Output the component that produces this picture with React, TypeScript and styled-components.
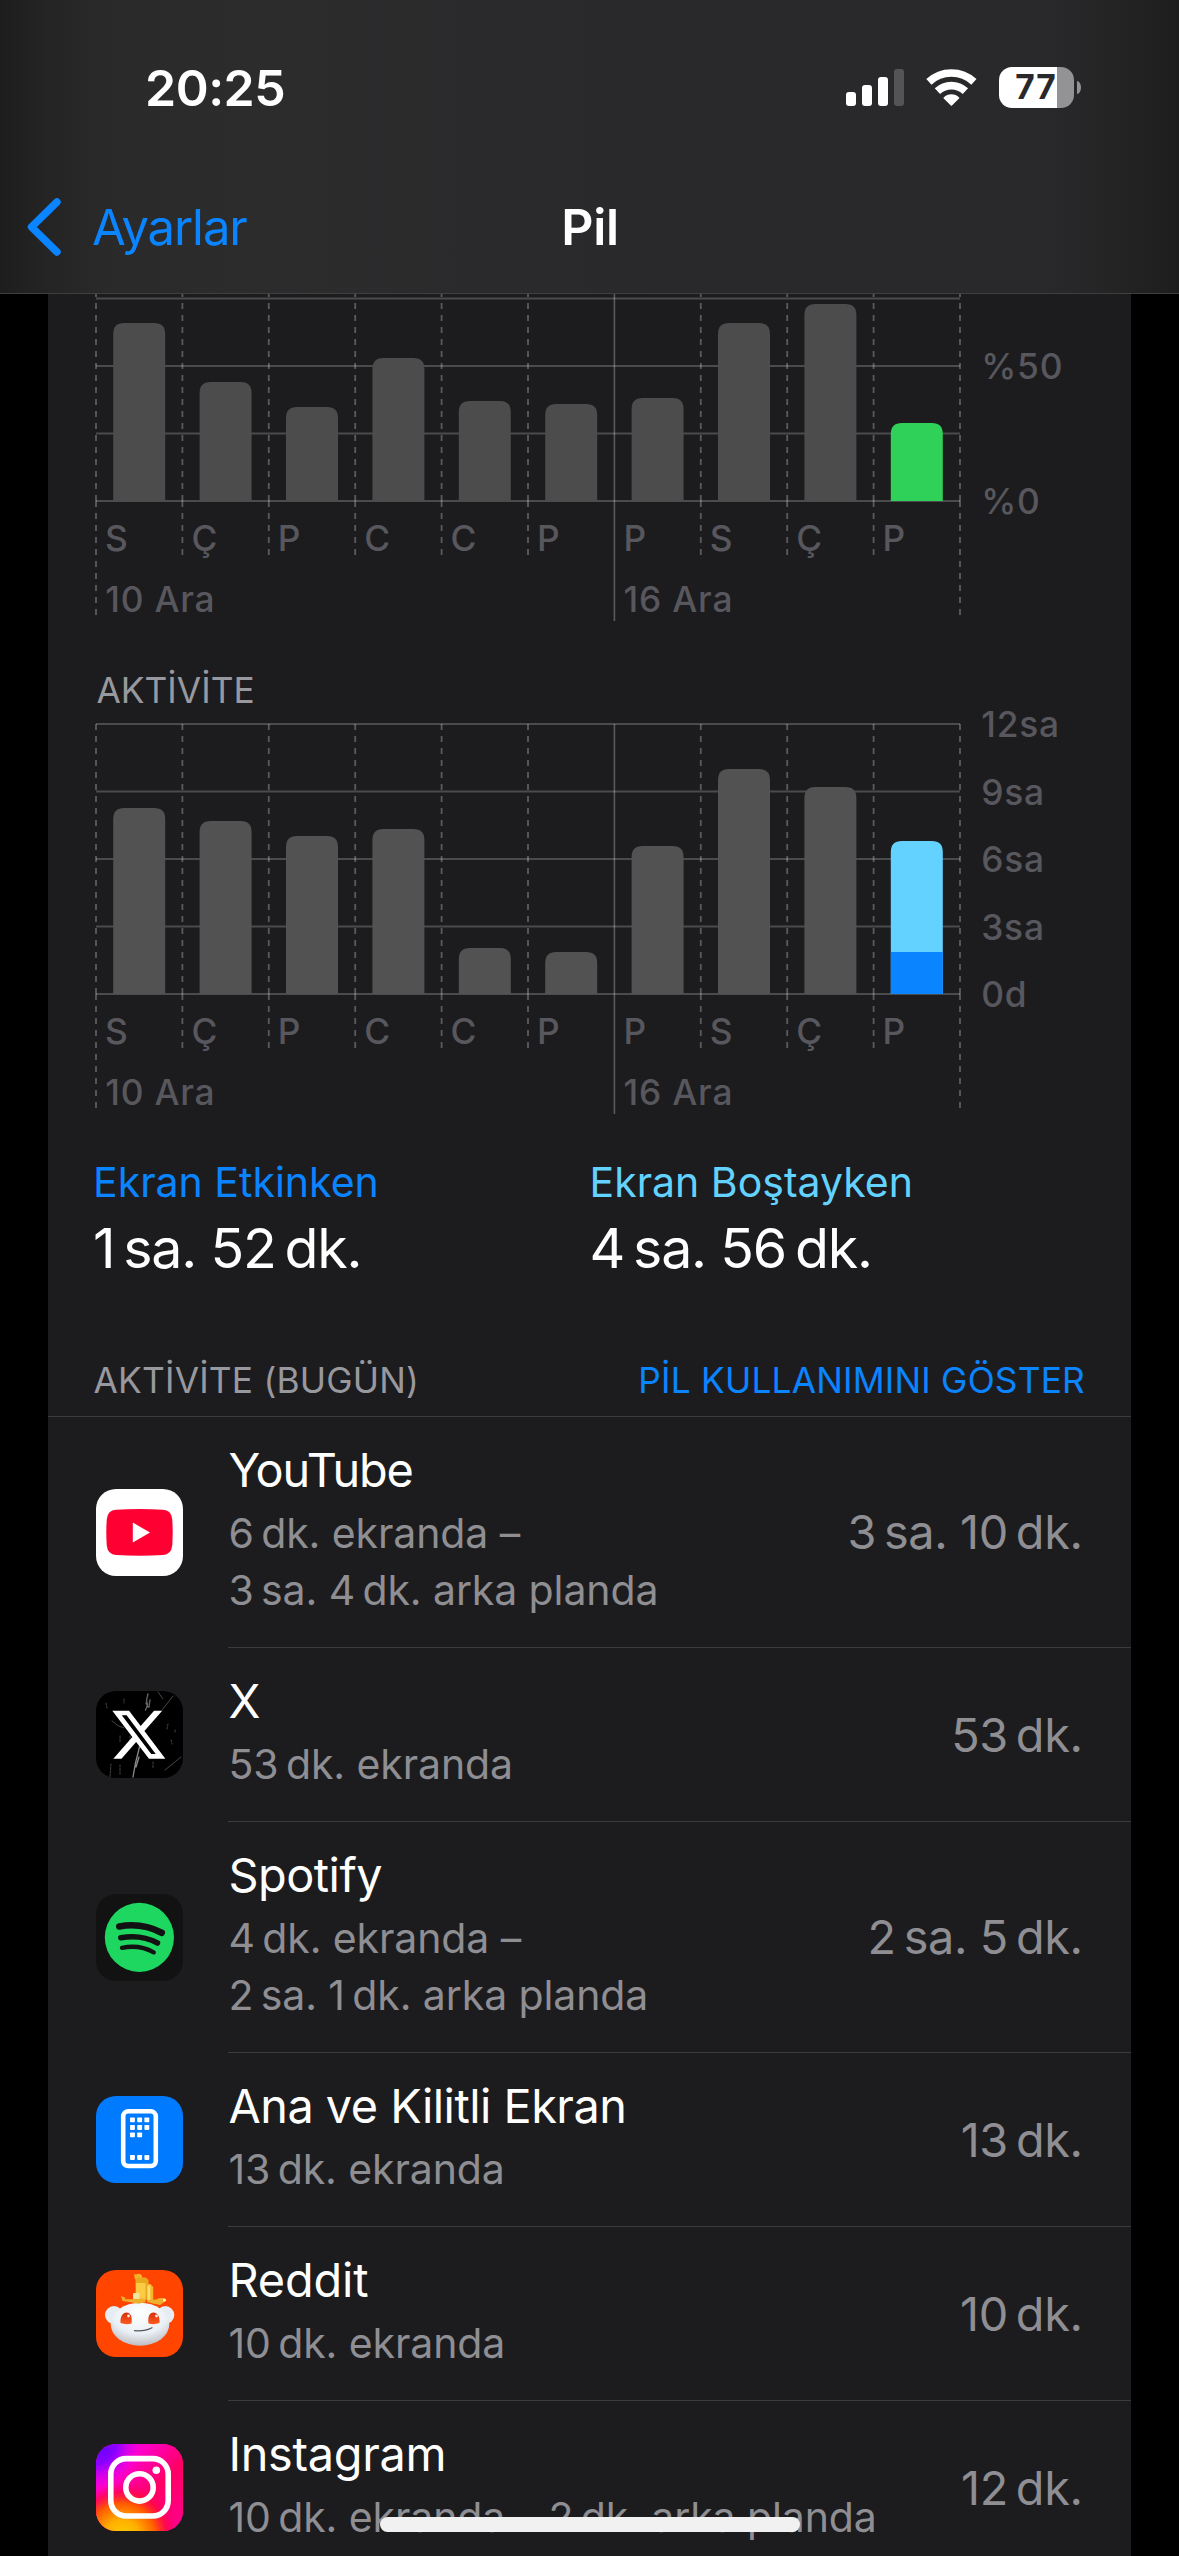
import React from "react";
import styled, { createGlobalStyle } from "styled-components";

const colors = {
  card: "#1c1c1e",
  blue: "#0a84ff",
  cyan: "#64d2ff",
  green: "#30d158",
  gray: "#8e8e93",
  label: "#58575d",
  caption: "#98989f",
  separator: "#3c3c3f",
};

const GlobalStyle = createGlobalStyle`
  html, body { margin: 0; background: #000; }
  body { font-family: Inter, Roboto, "Liberation Sans", sans-serif; }
`;

const Screen = styled.div`
  position: relative;
  display: flex;
  flex-direction: column;
  width: 1179px;
  height: 2556px;
  overflow: hidden;
  background: #000;
  color: #fff;
`;

const Header = styled.header`
  flex: none;
  height: 293px;
  border-bottom: 1px solid #3f3f42;
  background: linear-gradient(90deg, #1d1d1e 0, #242425 45px, #2a2a2b 110px, #2c2c2d 260px, #29292b 700px, #29292b 1040px, #242425 1115px, #1d1d1e 1179px);
`;

const StatusBar = styled.div`
  display: flex;
  align-items: center;
  justify-content: space-between;
  height: 175px;
  padding: 0 98px 0 145px;
`;

const Clock = styled.span`
  font-size: 50px;
  font-weight: 600;
  letter-spacing: -0.5px;
`;

const StatusIcons = styled.div`
  display: flex;
  align-items: center;
  gap: 22px;
`;

const Battery = styled.div`
  display: flex;
  align-items: center;
  gap: 3px;
`;

const BatteryBody = styled.div<{ $level: number }>`
  display: flex;
  align-items: center;
  justify-content: center;
  box-sizing: border-box;
  width: 75px;
  height: 41px;
  padding-right: 1px;
  border-radius: 13px;
  background: linear-gradient(90deg, #fff ${(p) => p.$level}%, #939395 ${(p) => p.$level}%);
  color: #29292b;
  font-size: 33.5px;
  font-weight: 700;
  line-height: 41px;
  letter-spacing: 1px;
`;

const BatteryNub = styled.div`
  width: 4px;
  height: 13px;
  border-radius: 0 4px 4px 0 / 0 6.5px 6.5px 0;
  background: #939395;
`;

const NavBar = styled.nav`
  display: grid;
  grid-template-columns: 1fr auto 1fr;
  align-items: center;
  height: 104px;
`;

const BackButton = styled.a`
  display: flex;
  align-items: center;
  gap: 31px;
  padding-left: 27px;
  color: ${colors.blue};
  font-size: 49px;
  letter-spacing: -1.1px;
`;

const NavTitle = styled.h1`
  margin: 0;
  padding-left: 1px;
  font-size: 50px;
  font-weight: 600;
  letter-spacing: -0.3px;
`;

const Card = styled.main`
  display: flex;
  flex-direction: column;
  flex: 1;
  min-height: 0;
  margin: 0 48px;
  overflow: hidden;
  background: ${colors.card};
`;

const ChartSvg = styled.svg`
  display: block;
  flex: none;
  overflow: visible;
`;

const AxisText = styled.text`
  fill: ${colors.label};
  font-size: 35.3px;
  font-weight: 500;
  letter-spacing: 0.8px;
`;

const ChartTitle = styled.h2`
  flex: none;
  margin: 39px 0 0 48.5px;
  color: ${colors.caption};
  font-size: 35.3px;
  font-weight: 400;
  line-height: 41px;
`;

const Legend = styled.section`
  display: grid;
  flex: none;
  grid-template-columns: 496.5px auto;
  padding: 38px 0 0 45px;
`;

const LegendItem = styled.div`
  display: flex;
  flex-direction: column;
  gap: 7px;
`;

const LegendLabel = styled.span<{ $color: string }>`
  color: ${(p) => p.$color};
  font-size: 41px;
  line-height: 50px;
`;

const LegendValue = styled.span`
  font-size: 55.5px;
  line-height: 68px;
  letter-spacing: -1.2px;
`;

const SectionHeader = styled.div`
  display: flex;
  flex: none;
  justify-content: space-between;
  padding: 78px 46px 14px 45.5px;
  border-bottom: 1px solid ${colors.separator};
  font-size: 35.3px;
  line-height: 42px;
  letter-spacing: 0.2px;
`;

const SectionTitle = styled.span`
  color: ${colors.caption};
`;

const SectionAction = styled.a`
  color: ${colors.blue};
`;

const AppRow = styled.div<{ $tall: boolean }>`
  display: flex;
  flex: none;
  align-items: center;
  gap: 45px;
  height: ${(p) => (p.$tall ? 231 : 174)}px;
  padding-left: 48px;
`;

const IconTile = styled.div<{ $background: string }>`
  display: flex;
  flex: none;
  width: 87px;
  height: 87px;
  margin-bottom: 1px;
  overflow: hidden;
  border-radius: 20px;
  background: ${(p) => p.$background};
`;

const RowBody = styled.div`
  display: flex;
  flex: 1;
  align-self: stretch;
  justify-content: space-between;
  border-bottom: 1px solid ${colors.separator};
`;

const RowText = styled.div`
  display: flex;
  flex-direction: column;
  padding: 23px 0 0 0.5px;
  white-space: nowrap;
`;

const AppName = styled.span<{ $tracking: number }>`
  margin-bottom: 4.5px;
  font-size: 46.8px;
  line-height: 60px;
  letter-spacing: ${(p) => p.$tracking}px;
`;

const Detail = styled.span`
  color: ${colors.gray};
  font-size: 41px;
  line-height: 57px;
  letter-spacing: -0.1px;
`;

const Duration = styled.span`
  align-self: center;
  padding-right: 48.5px;
  color: ${colors.gray};
  font-size: 46.8px;
  letter-spacing: -0.4px;
  white-space: nowrap;
`;

const HomeIndicator = styled.div`
  position: absolute;
  left: 380px;
  bottom: 24px;
  width: 420px;
  height: 15px;
  border-radius: 8px;
  background: #f1f1f1;
`;

/* ---------- charts ---------- */

const STEP = 86.4;
const PLOT_HEIGHT = 270;
const BAR_WIDTH = 52;
const DAYS = ["S", "Ç", "P", "C", "C", "P", "P", "S", "Ç", "P"];

type Segment = { value: number; color: string };
type ChartProps = {
  viewTop: number;
  viewBottom: number;
  bars: Segment[][];
  ticks: { at: number; text: string }[];
  label: string;
};

function Bar({ x, segments }: { x: number; segments: Segment[] }) {
  const total = segments.reduce((sum, s) => sum + s.value, 0);
  const top = PLOT_HEIGHT - total;
  const upper = segments[segments.length - 1];
  const r = 11;
  return (
    <g>
      <path
        fill={upper.color}
        d={`M${x} ${PLOT_HEIGHT}V${top + r}Q${x} ${top} ${x + r} ${top}H${x + BAR_WIDTH - r}Q${x + BAR_WIDTH} ${top} ${x + BAR_WIDTH} ${top + r}V${PLOT_HEIGHT}Z`}
      />
      {segments.length > 1 && (
        <rect x={x} y={PLOT_HEIGHT - segments[0].value} width={BAR_WIDTH} height={segments[0].value} fill={segments[0].color} />
      )}
    </g>
  );
}

function BarChart({ viewTop, viewBottom, bars, ticks, label }: ChartProps) {
  const width = STEP * 10;
  const height = viewBottom - viewTop;
  return (
    <ChartSvg width={1083} height={height} viewBox={`-48 ${viewTop} 1083 ${height}`} role="img" aria-label={label}>
      {[0, 1, 2, 3, 4].map((i) => (
        <line key={i} x1={0} x2={width} y1={i * 67.5} y2={i * 67.5} stroke="#4b4b4e" strokeWidth={2} />
      ))}
      {Array.from({ length: 11 }, (_, i) => {
        const x = i * STEP;
        if (i === 6) {
          return <line key={i} x1={x} x2={x} y1={0} y2={PLOT_HEIGHT + 120} stroke="#ebebf5" strokeOpacity={0.3} strokeWidth={1.6} />;
        }
        const end = i % 10 === 0 ? 114 : 54;
        return (
          <path
            key={i}
            d={`M${x} 0V${PLOT_HEIGHT}M${x} ${PLOT_HEIGHT}V${PLOT_HEIGHT + end}`}
            stroke="#ebebf5"
            strokeOpacity={0.3}
            strokeWidth={1.8}
            strokeDasharray="6 6"
          />
        );
      })}
      {bars.map((segments, i) => (
        <Bar key={i} x={i * STEP + 17.2} segments={segments} />
      ))}
      {DAYS.map((day, i) => (
        <AxisText key={i} x={i * STEP + 9} y={PLOT_HEIGHT + 50}>
          {day}
        </AxisText>
      ))}
      <AxisText x={9.2} y={PLOT_HEIGHT + 110.8}>10 Ara</AxisText>
      <AxisText x={STEP * 6 + 9.2} y={PLOT_HEIGHT + 110.8}>16 Ara</AxisText>
      {ticks.map((tick) => (
        <AxisText key={tick.text} x={width + 21.2} y={tick.at + 13}>
          {tick.text}
        </AxisText>
      ))}
    </ChartSvg>
  );
}

const levelBars: Segment[][] = [178, 119, 94, 143, 100, 97, 103, 178, 197, 78].map((value, i) => [
  { value, color: i === 9 ? colors.green : "#4c4c4c" },
]);

const activityBars: Segment[][] = [
  ...[186, 173, 158, 165, 46, 42, 148, 225, 207].map((value) => [{ value, color: "#525252" }]),
  [
    { value: 42, color: colors.blue },
    { value: 111, color: colors.cyan },
  ],
];

/* ---------- icons ---------- */

const SignalIcon = () => (
  <svg width="58" height="37" viewBox="0 0 58 37" fill="#fff">
    <rect x="0" y="23" width="10" height="14" rx="3" />
    <rect x="16" y="16" width="10" height="21" rx="3" />
    <rect x="32" y="8" width="10" height="29" rx="3" />
    <rect x="48" y="0" width="10" height="37" rx="3" fill="#545456" />
  </svg>
);

const WifiIcon = () => (
  <svg width="51" height="37" viewBox="0 0 51 37" fill="none" stroke="#fff">
    <path d="M2.9 12.9A33 33 0 0 1 47.9 12.9" strokeWidth="7.6" />
    <path d="M11.4 22.2A20.4 20.4 0 0 1 39.4 22.2" strokeWidth="7.8" />
    <path d="M25.4 36L18.3 29A10 10 0 0 1 32.5 29Z" fill="#fff" strokeWidth="1.6" strokeLinejoin="round" />
  </svg>
);

const BackChevron = () => (
  <svg width="34" height="58" viewBox="0 0 34 58" fill="none" stroke="currentColor" strokeWidth="7.4" strokeLinecap="round" strokeLinejoin="round">
    <path d="M30 4L4.500 29L30 54" />
  </svg>
);

const YouTubeIcon = () => (
  <svg width="87" height="87" viewBox="0 0 87 87">
    <path fill="#ff0033" d="M20 20.8Q43.500 19.200 67 20.800Q75.300 21.400 76.200 30Q77.200 43.300 76.200 56.700Q75.300 65.300 67 66Q43.500 67.600 20 66Q11.700 65.300 10.800 56.700Q9.800 43.300 10.800 30Q11.700 21.400 20 20.800Z" />
    <path fill="#fff" d="M36.800 33.600L54 43.400L36.800 53.400Z" />
  </svg>
);

const XIcon = () => (
  <svg width="87" height="87" viewBox="0 0 87 87">
    <g stroke="#fff" fill="none" strokeLinecap="round">
      <path d="M43.500 56L39.500 72L37 86M40 76l3-10" strokeWidth="1.300" opacity=".55" />
      <path d="M52 3l-1.500 6 1 5-2 5M54 9l-1 7M50 12l2 4" strokeWidth="1.400" opacity=".4" strokeDasharray="2 1" />
      <path d="M66 19L77 5M69 79L85 66M16 30q6 6 12 7M62 1l5 7" strokeWidth=".8" opacity=".35" />
      <path d="M28 8v4M10 12l1 5M15 73l-1 13M24 74v9M72 33l-1 5M75 49l1 4M24 45v6M57 71v6M79 39v3M34 45v5" strokeWidth=".9" opacity=".3" strokeDasharray="2 1.500" />
    </g>
    <g transform="translate(16.300 17.100) scale(2.210 2.220)">
      <path fill="#fff" d="M18.901 1.153h3.680l-8.040 9.190L24 22.846h-7.406l-5.800-7.584-6.638 7.584H.474l8.600-9.830L0 1.154h7.594l5.243 6.932ZM17.610 20.644h2.039L6.486 3.240H4.298Z" />
    </g>
  </svg>
);

const SpotifyIcon = () => (
  <svg width="87" height="87" viewBox="0 0 87 87" fill="none" stroke="#121212" strokeLinecap="round">
    <circle cx="43.400" cy="43.400" r="34.600" fill="#1ed760" stroke="none" />
    <path d="M23.300 32.400Q46 28.500 65.700 38.700" strokeWidth="6.600" />
    <path d="M24.800 43.800Q45 40 61.500 49" strokeWidth="5.500" />
    <path d="M26 53.800Q43.500 50.300 57.700 58.300" strokeWidth="4.400" />
  </svg>
);

const HomeScreenIcon = () => {
  const dots = [
    [0, 21.4], [1, 21.4], [2, 21.4],
    [0, 29], [1, 29], [2, 29],
    [0, 36.4], [1, 36.4],
    [0, 59], [1, 59], [2, 59],
  ];
  return (
    <svg width="87" height="87" viewBox="0 0 87 87">
      <rect x="27.200" y="15.300" width="32.600" height="54.700" rx="5" fill="none" stroke="#fff" strokeWidth="4.600" />
      {dots.map(([col, y]) => (
        <rect key={`${col}-${y}`} x={34 + col * 7.2} y={y} width="4.900" height="4.900" rx=".8" fill="#fff" />
      ))}
    </svg>
  );
};

const RedditIcon = () => (
  <svg width="87" height="87" viewBox="0 0 87 87">
    <defs>
      <radialGradient id="snooHead" cx=".5" cy=".25" r=".8">
        <stop offset="0" stopColor="#fff" />
        <stop offset=".6" stopColor="#e9f0f5" />
        <stop offset="1" stopColor="#b9b4bb" />
      </radialGradient>
      <linearGradient id="snooEye" x1="0" y1="0" x2="0" y2="1">
        <stop offset="0" stopColor="#d5300c" />
        <stop offset="1" stopColor="#ff5a1c" />
      </linearGradient>
    </defs>
    <circle cx="18" cy="45" r="9" fill="#e6ecf1" />
    <circle cx="69.300" cy="45" r="9" fill="#e6ecf1" />
    <ellipse cx="44" cy="54.200" rx="29.300" ry="21.500" fill="url(#snooHead)" />
    <path fill="#f0b429" d="M38 4.500l6-.8 2 2v3.500h-7z" />
    <path fill="#e9a91f" d="M39.500 9l3-1.500h7l3 2.500v20l-13-1z" />
    <path fill="#fccb45" d="M40 13h9.500v16H40z" />
    <path fill="#f3b72c" d="M51.500 14h3l2.700 3v14l-5.700.5z" />
    <path fill="#ffdc72" d="M51.500 15.500h2.800v15h-2.800z" />
    <path fill="#eeb02c" d="M25 26l3.500 1.200 1 2H37v-1h9l3.500 1v3l-7 1.500-9-1.700-7-1zM51 30l9-.500 3.500-1.500h4.500l1 3.500-5 3.500-5-1-8-2z" />
    <rect x="37" y="23" width="6.500" height="6" rx=".8" fill="#f2e6a0" />
    <circle cx="68.500" cy="30" r="1.600" fill="#fff1b0" />
    <path d="M24.500 53c-.5-6 2-10.500 6-10.500s6 4 5 11q-5.500 1.500-11-.5z" fill="url(#snooEye)" />
    <path d="M63.500 53c.5-6-2-10.500-6-10.500s-6 4-5 11q5.500 1.500 11-.5z" fill="url(#snooEye)" />
    <circle cx="32.500" cy="46" r="1.400" fill="#ffe9e0" />
    <circle cx="60.500" cy="46" r="1.400" fill="#ffe9e0" />
    <path d="M38.500 60.700Q49 61.500 56 57.700" fill="none" stroke="#5c5558" strokeWidth="1.200" strokeLinecap="round" />
  </svg>
);

const InstagramIcon = () => (
  <svg width="87" height="87" viewBox="0 0 87 87">
    <defs>
      <linearGradient id="igBase" x1="0" y1="0" x2="1" y2="1">
        <stop offset="0" stopColor="#d800ff" />
        <stop offset=".3" stopColor="#ff00c8" />
        <stop offset=".6" stopColor="#ff0064" />
        <stop offset="1" stopColor="#ff0090" />
      </linearGradient>
      <radialGradient id="igWarm" cx=".3" cy="1.080" r=".64">
        <stop offset="0" stopColor="#ffd000" />
        <stop offset=".32" stopColor="#ffb000" />
        <stop offset=".62" stopColor="#ff5a00" />
        <stop offset=".82" stopColor="#ff0a3c" stopOpacity=".7" />
        <stop offset="1" stopColor="#ff0064" stopOpacity="0" />
      </radialGradient>
      <radialGradient id="igViolet" cx="0" cy="0" r=".52">
        <stop offset="0" stopColor="#5a00ff" />
        <stop offset=".45" stopColor="#8a00ff" />
        <stop offset="1" stopColor="#f000f0" stopOpacity="0" />
      </radialGradient>
    </defs>
    <rect width="87" height="87" fill="url(#igBase)" />
    <rect width="87" height="87" fill="url(#igWarm)" />
    <rect width="87" height="87" fill="url(#igViolet)" />
    <g fill="none" stroke="#fff" strokeWidth="5.600">
      <rect x="14.800" y="14.600" width="57.400" height="57.400" rx="15.500" />
      <circle cx="43.500" cy="43.400" r="13.700" />
    </g>
    <circle cx="60.300" cy="26.300" r="3.800" fill="#fff" />
  </svg>
);

/* ---------- content ---------- */

type AppUsage = {
  name: string;
  details: string[];
  duration: string;
  background: string;
  icon: React.ReactNode;
  tracking?: number;
};

const apps: AppUsage[] = [
  {
    name: "YouTube",
    details: ["6\u2009dk. ekranda –", "3\u2009sa. 4\u2009dk. arka planda"],
    duration: "3\u2009sa. 10\u2009dk.",
    background: "#fff",
    icon: <YouTubeIcon />,
    tracking: -1.1,
  },
  { name: "X", details: ["53\u2009dk. ekranda"], duration: "53\u2009dk.", background: "#000", icon: <XIcon /> },
  {
    name: "Spotify",
    details: ["4\u2009dk. ekranda –", "2\u2009sa. 1\u2009dk. arka planda"],
    duration: "2\u2009sa. 5\u2009dk.",
    background: "#121212",
    icon: <SpotifyIcon />,
  },
  {
    name: "Ana ve Kilitli Ekran",
    details: ["13\u2009dk. ekranda"],
    duration: "13\u2009dk.",
    background: "#007aff",
    icon: <HomeScreenIcon />,
  },
  {
    name: "Reddit",
    details: ["10\u2009dk. ekranda"],
    duration: "10\u2009dk.",
    background: "#ff4500",
    icon: <RedditIcon />,
    tracking: -0.1,
  },
  {
    name: "Instagram",
    details: ["10\u2009dk. ekranda – 2\u2009dk. arka planda"],
    duration: "12\u2009dk.",
    background: "#ff0080",
    icon: <InstagramIcon />,
    tracking: -0.3,
  },
];

export default function App() {
  return (
    <Screen>
      <GlobalStyle />
      <Header>
        <StatusBar>
          <Clock>20:25</Clock>
          <StatusIcons>
            <SignalIcon />
            <WifiIcon />
            <Battery>
              <BatteryBody $level={77.5}>77</BatteryBody>
              <BatteryNub />
            </Battery>
          </StatusIcons>
        </StatusBar>
        <NavBar>
          <BackButton>
            <BackChevron />
            Ayarlar
          </BackButton>
          <NavTitle>Pil</NavTitle>
        </NavBar>
      </Header>
      <Card>
        <BarChart
          label="Pil düzeyi"
          viewTop={63}
          viewBottom={400}
          bars={levelBars}
          ticks={[
            { at: 135, text: "%50" },
            { at: 270, text: "%0" },
          ]}
        />
        <ChartTitle>AKTİVİTE</ChartTitle>
        <BarChart
          label="Aktivite"
          viewTop={-13}
          viewBottom={395}
          bars={activityBars}
          ticks={[
            { at: 0, text: "12sa" },
            { at: 67.5, text: "9sa" },
            { at: 135, text: "6sa" },
            { at: 202.5, text: "3sa" },
            { at: 270, text: "0d" },
          ]}
        />
        <Legend>
          <LegendItem>
            <LegendLabel $color={colors.blue}>Ekran Etkinken</LegendLabel>
            <LegendValue>{"1\u2009sa. 52\u2009dk."}</LegendValue>
          </LegendItem>
          <LegendItem>
            <LegendLabel $color={colors.cyan}>Ekran Boştayken</LegendLabel>
            <LegendValue>{"4\u2009sa. 56\u2009dk."}</LegendValue>
          </LegendItem>
        </Legend>
        <SectionHeader>
          <SectionTitle>AKTİVİTE (BUGÜN)</SectionTitle>
          <SectionAction>PİL KULLANIMINI GÖSTER</SectionAction>
        </SectionHeader>
        {apps.map((app) => (
          <AppRow key={app.name} $tall={app.details.length > 1}>
            <IconTile $background={app.background}>{app.icon}</IconTile>
            <RowBody>
              <RowText>
                <AppName $tracking={app.tracking ?? -0.5}>{app.name}</AppName>
                {app.details.map((line) => (
                  <Detail key={line}>{line}</Detail>
                ))}
              </RowText>
              <Duration>{app.duration}</Duration>
            </RowBody>
          </AppRow>
        ))}
      </Card>
      <HomeIndicator />
    </Screen>
  );
}
